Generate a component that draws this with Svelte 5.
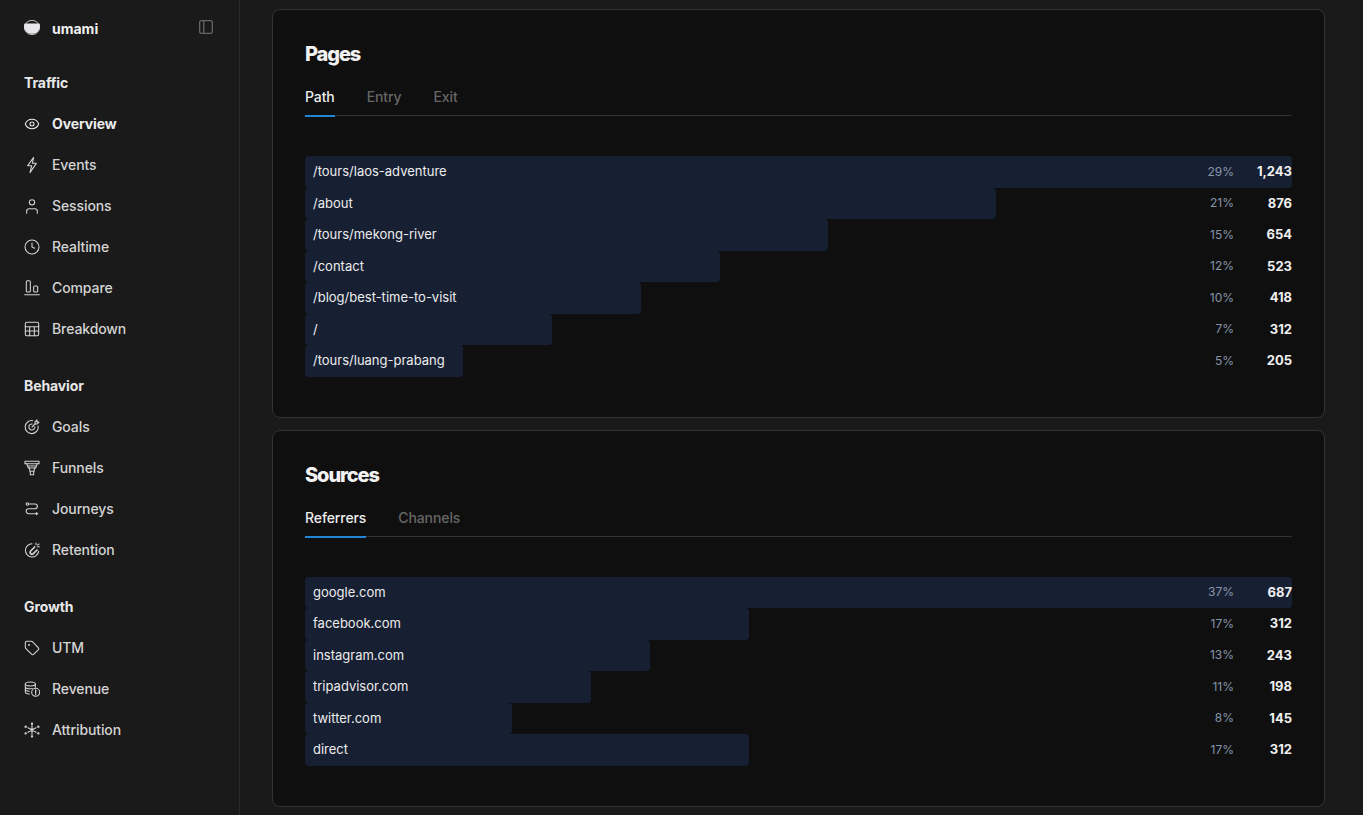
<script>
  const sections = [
    { title: 'Traffic', items: ['Overview', 'Events', 'Sessions', 'Realtime', 'Compare', 'Breakdown'] },
    { title: 'Behavior', items: ['Goals', 'Funnels', 'Journeys', 'Retention'] },
    { title: 'Growth', items: ['UTM', 'Revenue', 'Attribution'] }
  ];

  const cards = [
    {
      title: 'Pages',
      tabs: ['Path', 'Entry', 'Exit'],
      rows: [
        ['/tours/laos-adventure', 100, '29%', '1,243'],
        ['/about', 70, '21%', '876'],
        ['/tours/mekong-river', 53, '15%', '654'],
        ['/contact', 42, '12%', '523'],
        ['/blog/best-time-to-visit', 34, '10%', '418'],
        ['/', 25, '7%', '312'],
        ['/tours/luang-prabang', 16, '5%', '205']
      ]
    },
    {
      title: 'Sources',
      tabs: ['Referrers', 'Channels'],
      rows: [
        ['google.com', 100, '37%', '687'],
        ['facebook.com', 45, '17%', '312'],
        ['instagram.com', 35, '13%', '243'],
        ['tripadvisor.com', 29, '11%', '198'],
        ['twitter.com', 21, '8%', '145'],
        ['direct', 45, '17%', '312']
      ]
    }
  ];
</script>

{#snippet icon(name)}
  <svg class="icon" viewBox="0 0 24 24" fill="none" stroke="currentColor" stroke-width="2" stroke-linecap="round" stroke-linejoin="round">
    {#if name === 'Overview'}
      <path d="M2.062 12.348a1 1 0 0 1 0-.696 10.75 10.750 0 0 1 19.876 0 1 1 0 0 1 0 .696 10.750 10.750 0 0 1-19.876 0" />
      <circle cx="12" cy="12" r="3" />
    {:else if name === 'Events'}
      <path d="M14.500 .5 5.500 13h6L9 23.500 18.500 9.500h-6z" />
    {:else if name === 'Sessions'}
      <circle cx="12" cy="6.500" r="4" />
      <path d="M4 23v-3a4 4 0 0 1 4-4h8a4 4 0 0 1 4 4v3" />
    {:else if name === 'Realtime'}
      <circle cx="12" cy="12" r="10.500" />
      <path d="M12 6v6l4 2" />
    {:else if name === 'Compare'}
      <rect x="3.500" y="1" width="6" height="17" rx="1.500" />
      <rect x="14.500" y="9" width="6" height="9" rx="1.500" />
      <path d="M1 22h22" />
    {:else if name === 'Breakdown'}
      <rect x="2" y="2" width="20" height="20" rx="2" />
      <path d="M2 8.500h20M2 15h20M8.500 8.500V22M15.500 8.500V22" />
    {:else if name === 'Goals'}
      <path d="M21.200 10.500a9.800 9.800 0 1 1-8-8" />
      <path d="M16.300 11.800a4.500 4.500 0 1 1-4-4.300" />
      <path d="M12 12l4.500-4.500" />
      <path d="M16.500 7.500V4.500l3-3v3h3l-3 3z" />
    {:else if name === 'Funnels'}
      <path d="M1.500 2h21v3.500h-21z" />
      <path d="M4 5.500l2.500 6.500h11L20 5.500" />
      <path d="M6 9h12" />
      <path d="M8 12l1 5h6l1-5" />
      <path d="M9.500 17v5h5v-5" />
    {:else if name === 'Journeys'}
      <circle cx="5" cy="4.500" r="1.800" />
      <path d="M7 4.500h9.500a3.500 3.500 0 0 1 0 7H7a3.500 3.500 0 0 0 0 7.500h13" />
      <path d="M18.500 17.500l2 1.500-2 1.500" stroke-width="1.600" />
    {:else if name === 'Retention'}
      <path d="M12 2.500A10 10 0 1 0 22 14" />
      <path d="M16 7.500l-6 6a2.800 2.800 0 0 0 4 4l5.500-5.500" stroke-width="2.600" />
      <path d="M18 1.500v2.500M20.500 4.500 22.500 3M20 7h3" stroke-width="1.600" />
    {:else if name === 'UTM'}
      <path d="M12.586 2.586A2 2 0 0 0 11.172 2H4a2 2 0 0 0-2 2v7.172a2 2 0 0 0 .586 1.414l8.704 8.704a2.426 2.426 0 0 0 3.420 0l6.580-6.580a2.426 2.426 0 0 0 0-3.420z" />
      <circle cx="7.500" cy="7.500" r=".6" fill="currentColor" />
    {:else if name === 'Revenue'}
      <ellipse cx="9.500" cy="4.500" rx="7.500" ry="3" />
      <path d="M2 4.500v12c0 1.500 2.500 2.800 6 3M2 8.500c0 1.600 3 3 7.500 3 1 0 2-.1 3-.3M2 12.500c0 1.600 2.500 2.800 6 3M17 4.500v5" />
      <circle cx="17.500" cy="17" r="6" />
      <path d="M17.500 13.500v4.500M17.500 20.300v.2" stroke-width="2" />
    {:else if name === 'Attribution'}
      <circle cx="12" cy="12" r="1.800" />
      <path d="M12 5v14M6 8.500l12 7M18 8.500l-12 7" />
      <circle cx="12" cy="2.500" r="1" fill="currentColor" />
      <circle cx="12" cy="21.500" r="1" fill="currentColor" />
      <circle cx="2.500" cy="7" r="1" fill="currentColor" />
      <circle cx="21.500" cy="7" r="1" fill="currentColor" />
      <circle cx="2.500" cy="17" r="1" fill="currentColor" />
      <circle cx="21.500" cy="17" r="1" fill="currentColor" />
    {/if}
  </svg>
{/snippet}

<div class="page">
  <aside class="sidebar">
    <div class="brand">
      <div class="logo-wrap">
        <svg class="logo" viewBox="0 0 16 15">
          <ellipse cx="8" cy="7.500" rx="7.600" ry="7.100" fill="none" stroke="#e8e8ea" stroke-width=".8" />
          <path d="M.6 3.500H15.400A8 7.500 0 1 1 .6 3.500z" fill="#e8e8ea" />
        </svg>
        <span class="logo-text">umami</span>
      </div>
      <svg class="toggle" viewBox="0 0 16 16" fill="none" stroke="#666" stroke-width="1.300">
        <rect x="1.650" y="1.650" width="12.700" height="12.700" rx="1.500" />
        <path d="M5.800 1.650v12.700" />
      </svg>
    </div>

    {#each sections as section}
      <section class="nav-section">
        <div class="nav-title">{section.title}</div>
        {#each section.items as item}
          <div class="nav-item" class:active={item === 'Overview'}>
            {@render icon(item)}
            <span>{item}</span>
          </div>
        {/each}
      </section>
    {/each}
  </aside>

  <main class="content">
    {#each cards as card}
      <div class="card">
        <h2>{card.title}</h2>
        <div class="tabs">
          {#each card.tabs as tab, i}
            <div class="tab" class:selected={i === 0}>{tab}</div>
          {/each}
        </div>
        <div class="rows">
          {#each card.rows as row}
            <div class="row">
              <div class="bar" style="width: {row[1]}%"></div>
              <span class="label">{row[0]}</span>
              <span class="pct">{row[2]}</span>
              <span class="count">{row[3]}</span>
            </div>
          {/each}
        </div>
      </div>
    {/each}
  </main>
</div>

<style>
  :global(body) {
    margin: 0;
    background: #1a1a1a;
    font-family: Inter, "Liberation Sans", sans-serif;
    overflow: hidden;
  }

  .page {
    display: flex;
    height: 815px;
    overflow: hidden;
    background: #1a1a1a;
  }

  .sidebar {
    width: 240px;
    flex: none;
    box-sizing: border-box;
    padding: 8px 24px 0;
    border-right: 1px solid #2b2b2b;
    color: #e8e8e8;
  }

  .brand {
    display: flex;
    align-items: center;
    justify-content: space-between;
    height: 40px;
    margin-bottom: 14px;
  }

  .logo-wrap {
    display: flex;
    align-items: center;
    gap: 12px;
  }

  .logo {
    width: 16px;
    height: 15px;
    margin-top: -2px;
  }

  .logo-text {
    font-size: 14px;
    font-weight: 700;
    color: #f0f0f0;
  }

  .toggle {
    width: 16px;
    height: 16px;
    margin-right: 1px;
    margin-top: -2px;
  }

  .nav-section {
    margin-bottom: 16px;
  }

  .nav-title {
    height: 41px;
    line-height: 41px;
    font-size: 14px;
    font-weight: 700;
    letter-spacing: -0.1px;
    color: #e8e8e8;
  }

  .nav-item {
    display: flex;
    align-items: center;
    gap: 12px;
    height: 41px;
    font-size: 14px;
    font-weight: 500;
    letter-spacing: -0.1px;
    color: #d4d4d4;
  }

  .nav-item.active {
    font-weight: 700;
    color: #ececec;
  }

  .icon {
    width: 16px;
    height: 16px;
    flex: none;
    stroke-width: 1.6;
  }

  .content {
    flex: 1;
    min-width: 0;
    box-sizing: border-box;
    padding: 9px 38px 0 32px;
    display: flex;
    flex-direction: column;
    gap: 12px;
  }

  .card {
    box-sizing: border-box;
    padding: 32px 32px 40px;
    background: #0f0f0f;
    border: 1px solid #333;
    border-radius: 8px;
  }

  h2 {
    margin: 0;
    font-size: 20px;
    line-height: 24px;
    font-weight: 800;
    letter-spacing: -1.1px;
    color: #f2f2f2;
  }

  .tabs {
    display: flex;
    gap: 32px;
    margin-top: 13px;
    margin-bottom: 40px;
    border-bottom: 1px solid #333;
  }

  .tab {
    height: 38px;
    line-height: 36px;
    box-sizing: border-box;
    margin-bottom: -2px;
    font-size: 14px;
    font-weight: 500;
    letter-spacing: -0.1px;
    color: #666;
  }

  .tab.selected {
    color: #ededed;
    border-bottom: 2px solid #2185d8;
  }

  .row {
    position: relative;
    display: flex;
    align-items: center;
    box-sizing: border-box;
    height: 31.5px;
    padding-bottom: 1px;
    font-size: 13px;
  }

  .bar {
    position: absolute;
    top: 0;
    bottom: 0;
    left: 0;
    background: #172033;
    border-radius: 4px;
  }

  .label,
  .pct,
  .count {
    position: relative;
  }

  .label {
    flex: 1;
    padding-left: 8px;
    font-weight: 400;
    color: #ececec;
  }

  .pct {
    font-size: 12px;
    color: #8795aa;
    text-align: right;
  }

  .count {
    width: 58px;
    font-weight: 700;
    text-align: right;
    color: #f0f0f0;
  }
</style>
